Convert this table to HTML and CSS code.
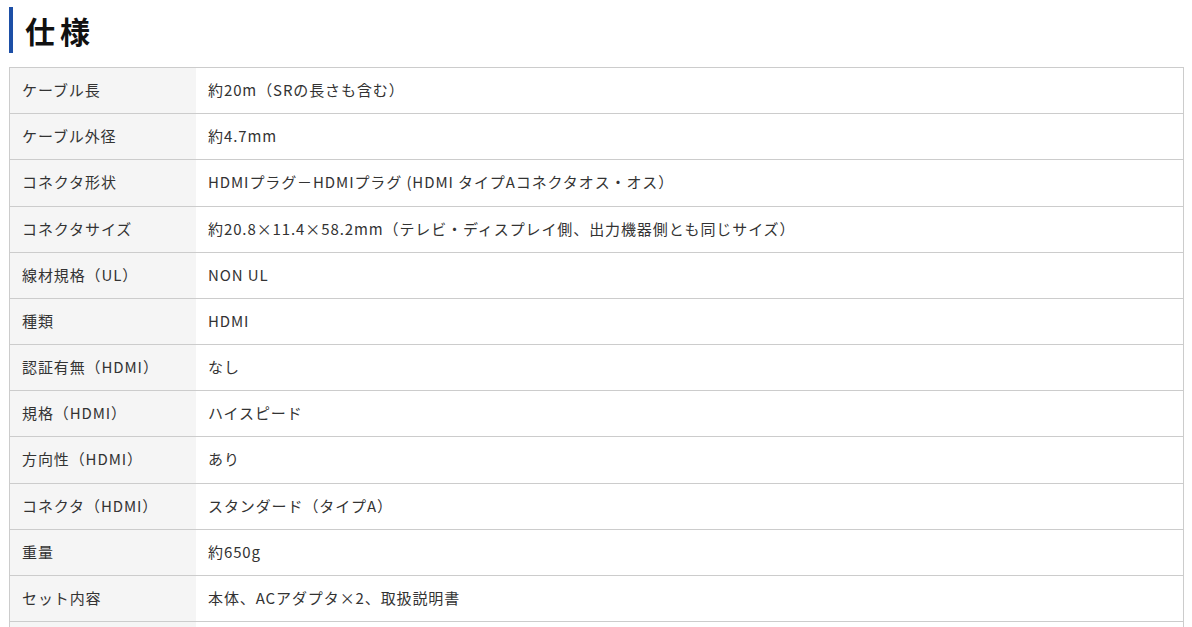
FILE: index.html
```html
<!DOCTYPE html>
<html lang="ja">
<head>
<meta charset="utf-8">
<link rel="stylesheet" href="styles.css">
</head>
<body>
<div class="page">
  <h2 class="title">仕様</h2>
  <table class="spec">
    <tr><th>ケーブル長</th><td>約20m（SRの長さも含む）</td></tr>
    <tr><th>ケーブル外径</th><td>約4.7mm</td></tr>
    <tr><th>コネクタ形状</th><td>HDMIプラグ－HDMIプラグ (HDMI タイプAコネクタオス・オス）</td></tr>
    <tr><th>コネクタサイズ</th><td>約20.8×11.4×58.2mm（テレビ・ディスプレイ側、出力機器側とも同じサイズ）</td></tr>
    <tr><th>線材規格（UL）</th><td>NON UL</td></tr>
    <tr><th>種類</th><td>HDMI</td></tr>
    <tr><th>認証有無（HDMI）</th><td>なし</td></tr>
    <tr><th>規格（HDMI）</th><td>ハイスピード</td></tr>
    <tr><th>方向性（HDMI）</th><td>あり</td></tr>
    <tr><th>コネクタ（HDMI）</th><td>スタンダード（タイプA）</td></tr>
    <tr><th>重量</th><td>約650g</td></tr>
    <tr><th>セット内容</th><td>本体、ACアダプタ×2、取扱説明書</td></tr>
    <tr><th>&nbsp;</th><td>&nbsp;</td></tr>
  </table>
</div>
</body>
</html>
```
FILE: styles.css
```css
html, body {
  margin: 0;
  padding: 0;
  background: #fff;
}
body {
  font-family: "Noto Sans CJK JP", "Noto Sans", sans-serif;
  color: #333;
}
.page {
  padding: 7px 8px 0 9px;
}
.title {
  margin: 0 0 14px 0;
  border-left: 4px solid #1d4fa6;
  padding-left: 12px;
  font-size: 30px;
  line-height: 46px;
  height: 46px;
  font-weight: 700;
  letter-spacing: 5px;
  color: #111;
}
.spec {
  width: 1175px;
  border-collapse: collapse;
  border: 1px solid #ccc;
  font-size: 15px;
  letter-spacing: 0.9px;
}
.spec th, .spec td {
  border-top: 1px solid #ccc;
  border-bottom: 1px solid #ccc;
  padding: 10px 12px 12px;
  line-height: 23.17px;
  text-align: left;
  vertical-align: middle;
  font-weight: 400;
}
.spec th {
  width: 162px;
  background: #f5f5f5;
  color: #333;
}
.spec td {
  background: #fff;
  color: #333;
}
```
